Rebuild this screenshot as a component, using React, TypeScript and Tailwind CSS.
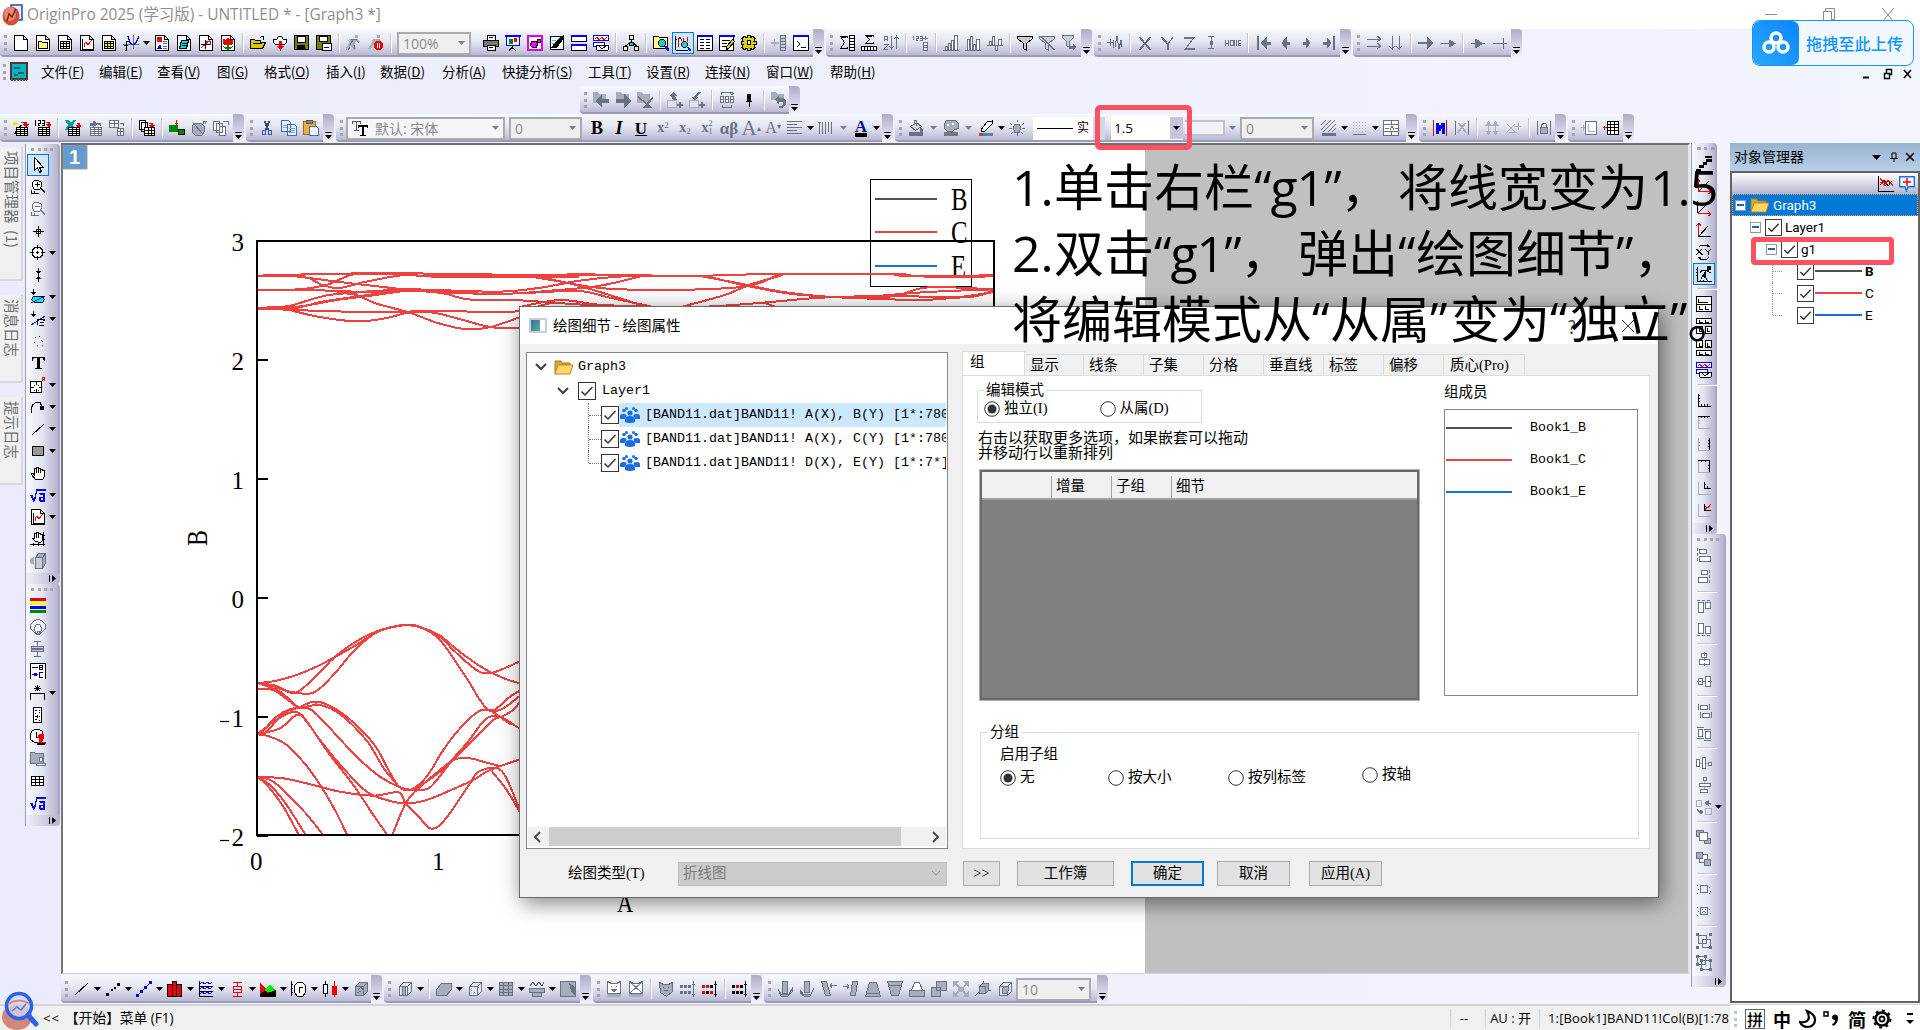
import React from "react";

type Shape = [string, string, string];

const K = "#000";
const W = "#fff";
const R = "#f00000";
const B = "#0000ff";
const N = "none";
const G = "#697184";
const L = "#a7adba";
const Y = "#ffff80";
const C = "#00d8e0";
const PAGE = "M1.5 .5h9l4 4v11h-13zM10.5 .5v4h4";
const GRID = "M3.5 6.5h9v7h-9zM3.5 8.5h9M3.5 11.5h9M6.5 6.5v7M9.5 6.5v7";
const SHEET = "M3.5 7.5h11v8h-11zM3.5 9.5h11M3.5 11.5h11M3.5 13.5h11M7.5 7.5v8M11.5 7.5v8";
const CUBE = "M2.5 5.5l4-4h8v9l-4 4h-8zM2.5 5.5h8v9M10.5 5.5l4-4";

const icons: Record<string, Shape[]> = {
  new: [[K, W, PAGE]],
  open: [[K, W, PAGE], [K, Y, "M3.5 6.5h3l1 1h5v6h-9z"]],
  sheet: [[K, W, PAGE], [K, N, GRID]],
  gpage: [[K, W, PAGE], [K, N, "M3.5 4v10h10"], [R, N, "M5 12v-3l2-2 2 3 3-4v-1"]],
  matrix: [[K, W, PAGE], [K, "#ff0", GRID]],
  func: [[G, N, "M0 9.5h16M10.5 0v14"], [K, N, "M5.5 6.5h-2v9h-2M1 10.5h4"], [B, N, "M4 1.500h1l2 6 2 2h2l2-2 3-6"]],
  layout: [[K, W, PAGE], [N, R, "M3 2h5v5H3z"], [N, B, "M3 14l3-5 2 5z"], [G, N, "M9 6.500h4M9 8.500h4M9 11.500h4M9 13.500h4"]],
  notes: [[K, W, PAGE], [K, C, "M5.500 5.500h7l-2 8h-7z"], [K, N, "M6 8.500h5M6 10.500h5"]],
  axis: [[K, W, PAGE], [R, N, "M3 13l9-8M8 6h4v4"], [K, N, "M3 9.500h9M7.500 5v9"]],
  flower: [[K, W, PAGE], [N, R, "M3 4l3 1 2-3 2 3 3-1v5l-5 2-5-2z"], [N, "#080", "M3 11l5 2 5-2-2 3H5zM7 9h2v6H7z"]],
  folder: [[K, "#d8c800", "M.5 13.500v-9h4l1 1h5v2h5l-3 6z"], [K, N, "M3 8.500h9M9.500 3.500l2-2h2v3"]],
  cloud: [[K, W, "M3.500 9.500l-2-2v-3h3l2-3h3l2 3h3v3l-2 2z"], [R, R, "M7.500 6h2v5h2l-3 4-3-4h2z"]],
  save: [[K, "#7d7a00", "M.5 .5h14v14h-14z"], [K, W, "M3.500 1.500h8v6h-8z"], [K, K, "M3.500 10.500h7v4h-7z"]],
  savep: [[K, "#7d7a00", "M.5 .5h14v14h-14z"], [K, W, "M3.500 1.500h8v5h-8zM6.500 8.500h9v7h-9z"], [B, N, "M8 12.500h5"]],
  run: [[N, L, "M9 0h3v3h-3zM5 4h7l2 3-2 1-2-2-2 4 2 3-2 3-1-3-3-2-2 4h-3l4-7 1-3-2 1-1 2H1l2-4z"], [G, N, "M5 4.500h6M7 5l-3 5M8 10l1 4M2 15l2-3M11 6l2 2"]],
  stop: [[N, L, "M9 0h3v3h-3zM5 4h7l1 2-4 1-1 4-3-1-2 4h-3l4-7z"], [R, R, "M8.500 6.500h4l2 2v4l-2 2h-4l-2-2v-4z"], [W, N, "M9.500 8v5M11.500 8v5"]],
  print: [[K, W, "M4.500 .5h8v5h-8z"], [K, "#777", "M.5 5.500h15v6H.5z"], [K, W, "M4.500 10.500h8v5h-8z"], [N, "#0c0", "M12 7h2v2h-2z"], [K, N, "M6 2.500h4M6 12.500h4"]],
  slide: [[B, "#e8ffff", "M1.500 1.500h13v9h-13z"], [B, B, "M.5 .5h15v1H.5z"], [N, "#080", "M4 4h4v5H4z"], [N, R, "M9 3h3v4h-3z"], [K, N, "M7.500 11v3M4 15.500l3-3 4 3"]],
  mag: [[("#e000e0"), W, "M.5 .5h15v15H.5zM1.500 1.500h13v13h-13z"], [K, "#f0f", "M4.500 6.500h5l1 2-1 4h-4l-2-2zM10.500 4v3h3v-3z"]],
  edit: [[K, W, "M1.500 1.500h13v13h-13z"], [K, K, "M2 13l8-9 4-3v3l-6 8z"], [C, N, "M3 5.500h4M3 8.500h3"]],
  tile: [[K, W, "M.5 .5h15v6H.5zM.5 9.500h15v6H.5z"], [B, B, "M.5 .5h15v1H.5zM.5 9.500h15v1H.5z"]],
  waves: [[B, W, "M.5 .5h15v5H.5zM.5 7.500h11v4H.5z"], [R, N, "M2 3.500l2-1 2 2 3-2 2 2 3-2"], [K, W, "M3.500 10.500h12v4l-1 1h-10l-1-1z"], [K, N, "M6 11l2 2h2l3-2"]],
  tree: [[K, Y, "M6.500 .5h4v4h-4zM.5 11.500h4v4h-4zM11.500 11.500h4v4h-4z"], [K, N, "M8.500 4.500v3M7 8l-5 3M10 8l4 3"], [K, C, "M6.500 7.500h4v3h-4z"]],
  find: [[K, Y, "M.5 1.500h5l1 1h8v11H.5z"], [K, C, "M5.500 6.500l2-2h3l2 2v3l-2 2h-3l-2-2z"], [B, B, "M11 11h2l3 4-1 1z"]],
  gfind: [[K, N, "M.5 1v14M.5 15.500h12M1 4.500h1"], [R, N, "M3 12V5l2-3 2 4M8 3v3M12 2v5"], [K, C, "M6.500 8.500l2-2h2l2 2v2l-2 2h-2l-2-2z"], [B, B, "M12 12h1l3 3-1 1z"]],
  table: [[K, W, "M.5 .5h15v15H.5z"], [B, B, "M.5 .5h15v1H.5z"], [K, N, "M3 4.500h4M9 4.500h4M3 7.500h4M9 7.500h4M3 10.500h4M9 10.500h4M3 13.500h4M9 13.500h4"]],
  tedit: [[K, W, "M.5 .5h14v15H.5z"], [B, B, "M.5 .5h15v1H.5z"], [K, N, "M3 5.500h8M3 8.500h5M3 11.500h4"], [K, "#dd0", "M13.500 4.500l2 2-6 7-2 1v-3z"]],
  gear: [[K, "#e0d000", "M6 .5h3v2l3-1 2 2-1 3h2v3h-2l1 3-2 2-3-1v2h-3v-2l-3 1-2-2 1-3h-2v-3h2l-1-3 2-2 3 1z"], [K, W, "M6.500 5.500h3v4h-3z"]],
  addcol: [[L, L, "M0 7.500h7v1H0zM3.500 4v8"], [G, "#c8ccd6", "M9.500 .5h5v15h-5zM9.500 3.500h5M9.500 6.500h5M9.500 9.500h5M9.500 12.500h5"]],
  cmd: [[K, W, "M.5 .5h15v15H.5z"], [B, B, "M.5 .5h15v1H.5z"], [K, N, "M4 6l3 3-3 3M8 12.500h5"]],
  sigcol: [[K, N, "M8 3V1.500H1.500l4 6-4 6H8V12M2 2.500h5"], [K, W, "M10.500 .5h5v15h-5zM10.500 3.500h5M10.500 6.500h5M10.500 9.500h5M10.500 12.500h5"]],
  sigrow: [[K, N, "M12 2V.5H4.500l4 4-4 4h8V7M5 1.500h6"], [K, W, "M.5 11.500h15v4H.5zM3.500 12v3M6.500 12v3M9.500 12v3M12.500 12v3"]],
  sort: [[G, N, "M1 6V1.500h3V6M1 4.500h3M1 9.500h4l-4 5h4M8.500 1v13M13.500 1v13M6.500 11l2 3 2-3M11.500 4l2-3 2 3"]],
  num: [[G, N, "M.5 1v4M3 1.500h2v2H3v2h2M7 1.500h2v4H7M7 3.500h2M12 1v4M10 3.500h5"], [G, W, "M10.500 7.500h4v8h-4zM10.500 10.500h4M10.500 12.500h4"]],
  bars1: [[G, W, "M2.500 11.500h2v4h-2zM5.500 8.500h2v7h-2zM8.500 5.500h2v10h-2zM11.500 .5h3v15h-3z"], [G, N, "M0 15.500h16"]],
  bars2: [[G, W, "M2.500 4.500h2v11h-2zM5.500 1.500h2v14h-2zM8.500 9.500h2v6h-2zM11.500 4.500h3v11h-3z"], [G, N, "M0 15.500h16"]],
  bars3: [[G, W, "M2.500 6.500h2v4h-2zM5.500 1.500h2v9h-2zM8.500 10.500h2v5h-2zM11.500 4.500h3v6h-3z"], [G, N, "M0 10.500h16"]],
  filter: [[K, "#ccc", "M.5 1.500h15v2l-6 5v7l-3-2v-5l-6-5z"]],
  filterx: [[G, "#ccd0da", "M.5 1.500h15v2l-6 5v7l-3-2v-5l-6-5z"], [G, N, "M1 1l14 14M2 1l14 14"]],
  filterr: [[G, "#ccd0da", "M1.500 .5h11v2l-4 4v6l-3-2v-4l-4-4z"], [G, G, "M8 11h4v-2l3 3-3 3v-2h-4z"]],
  addw: [[G, N, "M0 7.500h6M3 4v7M6.500 13V5M8 12l2-11 2 13 2-9 1 7"]],
  xx: [[G, N, "M2 2l11 13M3 2l11 13M13 2L2 15M14 2L3 15"]],
  yy: [[G, N, "M2 2l6 7v6M3 2l6 7v6M14 2L9 9"]],
  zz: [[G, N, "M3 2.500h10L4 14.500h10M3 3.500h9M4 13.500h10"]],
  err: [[G, N, "M5 1.500h6M5 13.500h6M8.500 1v13"], [G, G, "M7.500 6.500h2v3h-2z"]],
  home: [[G, N, "M0.500 5v6M3.500 5v6M0 8.500h3M5.500 5v6M8 5v6M5 5.500h3M5 10.500h3M9.500 11V5M11.500 5v6M14 5.500h2M14 8.500h2M14 10.500h2M13.500 5v6"]],
  first: [[G, G, "M2.500 1v14M3.500 1v14M15 7v2h-4v4L6 8l5-5v4z"]],
  prev: [[G, G, "M12 7v2h-3v4L5 8l4-5v4z"]],
  next: [[G, G, "M4 7v2h3v4l4-5-4-5v4z"]],
  last: [[G, G, "M12.500 1v14M13.500 1v14M2 7v2h4v4l4-5-4-5v4z"]],
  arr2: [[G, N, "M1 4.500h14M11 1l4 3-4 3M1 11.500h14M11 8l4 3-4 3"]],
  arr2d: [[G, N, "M4.500 1v14M1 11l3 3 3-3M11.500 1v14M8 11l3 3 3-3"]],
  arrR: [[G, G, "M0 7.500h9v1H0zM9 2v12l6-6z"]],
  arrS: [[G, G, "M1 8.500h9M9 5v7l6-3.500z"]],
  arrT: [[G, G, "M1 8.500h14M5 4v9l8-4.500z"]],
  arrL: [[G, N, "M1 8.500h14M11.500 3v11"]],
  back: [[N, L, "M0 0h5l1 2h7v9H0z"], [N, G, "M2 9l7-7v5h7v4H9v5z"]],
  fwd: [[N, L, "M1 0h5l1 2h7v9H1z"], [N, G, "M16 9L9 2v5H1v4h8v5z"]],
  upf: [[N, L, "M0 0h5l1 2h7v9H0z"], [N, G, "M1 4l9 7 5-6 1 1-4 6 3 4H5l4-4-8-6z"]],
  upadd: [[L, "#dfe3ee", "M.5 8.500h9v7h-9z"], [N, G, "M6 0l4 4H8l2 4H6L4 4H2zM12 10h2v2h2v2h-2v2h-2v-2h-2v-2h2z"]],
  dnadd: [[L, "#dfe3ee", "M.5 8.500h9v7h-9z"], [N, G, "M9 0h3L7 5h2l-3 4-4-4h2zM12 10h2v2h2v2h-2v2h-2v-2h-2v-2h2z"]],
  cycle: [[G, W, "M1.500 4.500h3v6h-3zM6.500 4.500h3v6h-3zM11.500 4.500h3v6h-3zM1.500 7.500h3M6.500 7.500h3M11.500 7.500h3"], [G, N, "M2 2.500V.5h11v2M3 13v2.500h9v-3M11 1l2 2 2-2"]],
  pin: [[K, K, "M6.500 2.500h3v6h-3zM5 9.500h6M8.500 10v5"]],
  undo: [[N, L, "M0 0h5l1 2h7v6H0z"], [N, G, "M4 7l4-4v3h4l3 3v4l-4 3h-3v-2h2l2-2v-2H8v3z"]],
  wand: [[N, "#e8e800", "M0 2h3v1h2v2H0z"], [K, N, "M1 14l7-9M2 14l7-9"], [R, R, "M8 2.500h5v2M11 4.500h4l-2 2z"], [K, W, SHEET]],
  n123: [[K, N, "M.5 0v6M3 .5h2v2.500H3v2.500h2M7 .5h2v5H7M7 3.500h2"], [R, R, "M11 2.500h3v2M12 4.500h4l-2 2z"], [K, W, SHEET]],
  excel: [[N, "#00a0a0", "M0 0h4l2 3 2-3h3L8 5l3 5H7L5 7l-2 3H0l3-5z"], [R, R, "M12 3.500h2v2M12 5.500h4l-2 2z"], [K, W, SHEET]],
  gsheet: [[G, G, "M3 3h4l-1-2 4 3-4 3v-2H3zM10 4l3-1 1 3"], [G, W, SHEET]],
  gsheet2: [[G, W, "M.5 .5h9v7h-9zM.5 3.500h9M5.500 1v6M11 3.500h3v2"], [G, W, "M8.500 8.500h6v7h-6zM8.500 11.500h6M11.500 8v7"]],
  batch: [[K, W, "M.5 .5h6v9h-6zM2.500 2.500h6v9h-6z"], [R, R, "M10 3.500h3v2M11 5.500h4l-2 2z"], [K, W, "M5.500 7.500h10v8h-10zM5.500 10.500h10M5.500 13.500h10M9.500 7v8M12.500 7v8"]],
  plug: [[N, "#008800", "M0 5h9v7H0z"], [R, R, "M7.500 0v5M6 3.500h3"], [K, "#080", "M9.500 9.500h6v5h-6z"]],
  globe: [[G, L, "M2.500 3.500h8l3 3v5l-3 4h-6l-3-3v-6z"], [G, N, "M3 4l9 10M12 4v-3h4M14 1v3"]],
  copyg: [[G, W, "M.5 1.500h6v9h-6zM3.500 3.500h6v9h-6zM6.500 6.500h6v9h-6z"], [G, N, "M10 1.500h5v3"]],
  cut: [[("#3a4a66"), N, "M5 1l4 9M6 1l4 9M11 1L7 10M10 1L6 10"], ["#2858b8", N, "M3.500 10.500h3v4h-3zM9.500 10.500h3v4h-3z"]],
  copy: [["#3c6cc0", "#e6f0ff", "M.5 .5h7l2 2v9h-9zM6.500 4.500h7l2 2v9h-9z"], ["#7aa8e8", N, "M8 8.500h6M8 10.500h6M8 12.500h6M2 5.500h4M2 7.500h4"]],
  paste: [["#a06818", "#e8b040", "M.5 1.500h12v13H.5z"], ["#555", "#888", "M3.500 .5h6v3h-6z"], ["#3c6cc0", "#eef4ff", "M6.500 6.500h7l2 2v7h-9z"]],
  fontTT: [[N, "#555", "M0 1h9v3H8V2H5v8h2v1H2v-1h2V2H1v2H0z"], [N, K, "M6 5h10v3h-1V7h-3v8h2v1H8v-1h2V7H7v1H6z"]],
  align: [[G, N, "M0 1.500h15M0 4.500h10M0 7.500h15M0 10.500h10M0 13.500h15"]],
  vlines: [[G, N, "M1.500 2v12M4.500 2v12M7.500 2v12M10.500 2v10M13.500 2v12M0 2.500h3"]],
  bucket: [[G, "#d5d9e3", "M2.500 6.500l6-4 5 4-6 4z"], [G, N, "M6.500 5V.5h2V6"], [N, G, "M12 7l3 3v2h-3zM1 12h14v4H1z"]],
  palette: [[G, L, "M3.500 .5h9l3 3v5l-4 1-2 2h-5l-3-3v-5z"], [N, W, "M4 4h2v2H4zM9 3h2v2H9z"], [N, "#777", "M1 12h14v4H1z"]],
  pen: [[K, W, "M3 10l6-8 5-1v3l-7 7-4 1z"], [N, "#e03030", "M1 13h4v3H1z"], [N, "#2090e0", "M5 13h4v3H5z"], [N, "#30b050", "M9 13h3v3H9z"], [N, "#b050c0", "M12 13h3v3h-3z"]],
  bulb: [[G, L, "M5.500 4.500h5l1 3-1 5h-5l-1-5z"], [G, N, "M1 3l2 2M15 3l-2 2M0 8.500h3M13 8.500h3M2 14l2-2M14 14l-2-2M8.500 0v2M8.500 13v3"]],
  hatch: [[G, N, "M0 5l5-5M0 10l10-10M2 12L14 0M7 12l8-8M11 12l4-4M3 2l-3 3"], [N, G, "M1 13h14v3H1z"]],
  dotg: [[L, N, "M1 2.500h1m2 0h1m2 0h1m2 0h1m2 0h1M1 5.500h1m2 0h1m2 0h1m2 0h1m2 0h1M1 8.500h1m2 0h1m2 0h1m2 0h1m2 0h1M1 11.500h1m2 0h1m2 0h1m2 0h1m2 0h1"], [G, N, "M1 14.500h13"]],
  tblA: [[G, W, "M.5 .5h15v15H.5zM.5 4.500h15M.5 11.500h15M8.500 1v4M8.500 12v3"], [G, N, "M2 8.500h4M7 9.500l2-3 2 3M12 8.500h3"]],
  mred: [[R, N, "M1.500 0v16M14.500 0v16"], [B, B, "M4 13V3h2l2 4 2-4h2v10h-2V7l-2 4-2-4v6z"]],
  mx: [[G, N, "M1.500 1v14M14.500 1v14"], [L, N, "M4 3l8 10M5 3l8 10M12 3L4 13M11 3L3 13"]],
  mv: [[L, L, "M4.500 2v12M2 5l2.500-3L7 5zM2 11l2.500 3L7 11zM11.500 2v12M9 5l2.500-3L14 5zM9 11l2.500 3L14 11z"]],
  mv2: [[L, N, "M1 4l8 8M9 4l-8 8M8 6.500h7M12.500 3v7M3 12.500h8"]],
  lock: [[G, N, "M1.500 1v14M14.500 1v14M5.500 7V5l2-2h2l1 2v2"], [G, L, "M4.500 7.500h7v6h-7z"]],
  addl: [[L, N, "M0 7.500h4M2 5v6"], [G, W, "M4.500 1.500h11v13h-11z"], [L, N, "M7.500 4v7h6"]],
  addt: [[R, R, "M0 7.500h4M1.500 6v4"], [K, W, "M4.500 1.500h11v13h-11zM4.500 4.500h11M4.500 7.500h11M4.500 10.500h11M7.500 1v13M11.500 1v13"]],
  cursor: [[K, W, "M4.500 .5v13l3-3 2 5 2-1-2-4h4z"]],
  zin: [[K, W, "M2.500 3.500l2-2h4l3 2v4l-2 3h-5l-2-3z"], [K, N, "M5 5.500h5M7.500 3v5M10 9l5 5M11 9l4 4M1.500 11v4M1 14.500h8M4.500 12v3"]],
  zout: [[G, W, "M2.500 3.500l2-2h4l3 2v4l-2 3h-5l-2-3z"], [G, N, "M5 5.500h5M10 9l5 5M11 9l4 4M1.500 11v4M1 14.500h8M4.500 12v3"]],
  cross: [[K, W, "M6.500 6.500h4v4h-4z"], [K, N, "M3 8.500h11M8.500 3v11"]],
  target: [[K, W, "M3.500 3.500l2-1h4l2 1 1 2v4l-1 2-2 1h-4l-2-1-1-2v-4z"], [K, N, "M0 7.500h4M11 7.500h4M7.500 0v4M7.500 11v4M6 7.500h3M7.500 6v3"]],
  range: [[K, K, "M8.500 1v14M6.500 4.500h4l-2 2zM6.500 11.500h4l-2-2z"]],
  ellip: [[K, K, "M3.500 0v4M1.500 3.500h4l-2 2z"], [K, "#00f0f0", "M3.500 7.500h9l2 3-2 3h-8l-3-3z"], [B, N, "M1 14l14-7"]],
  mask: [[K, K, "M3.500 0v4M1.500 3.500h4l-2 2z"], [B, N, "M1 14L15 5"], [K, N, "M7.500 8.500h7M7.500 8v6M9 14.500h5M10 11.500h4M13 9.500h2"]],
  dots: [[K, K, "M5 4.500h1M11 7.500h1M4 9.500h1M7 12.500h1M12 12.500h1M9 3.500h1M12 8h1"]],
  tt: [[N, K, "M2 2h13v4h-1l-1-3h-3v10h2v1H5v-1h2V3H4L3 6H2z"]],
  addx: [[K, W, "M.5 4.500h11v11H.5z"], [K, N, "M6.500 4v4M6.500 12v4M0 10.500h4M9 10.500h3M4 8h1M8 8h1M4 13h1M8 13h1"], [R, N, "M12.500 4V.5h2V4M12 2.500h3"]],
  curve: [[K, N, "M1 13.500v-4l2-4 3-2h4l2 4"], [K, K, "M10.500 7.500h3v3h-3z"]],
  line: [[K, N, "M2 14L14 3"]],
  rect: [[K, "#999", "M2.500 3.500h11v9h-11z"]],
  hand: [[K, W, "M5.500 14.500l-4-5v-1h2l1 2v-7h2v-1h2v1h2v1h2v1h2v6l-2 3z"], [K, N, "M6.500 4v4M8.500 3v5M10.500 4v4"]],
  sqrt: [[B, N, "M0 8.500h2l2 6 3-12h9M1 8.500l3 6M5 12l2-10M7 3.500h9"], [B, N, "M9 6.500h5v8h-4v-4h4M10 7.500h3M9.500 10v4M13.500 7v8M10 13.500h4"]],
  handa: [[K, W, "M5.500 10.500l-3-3h2v-5h2v-1h2v1h2v1h2v6l-2 2z"], [K, N, "M6.500 3v4M8.500 3v4M0 13.500h15M13.500 1v14M3.500 12v3M8.500 12v3M12 4.500h3M12 8.500h3"]],
  box3: [[G, L, "M5.500 4.500l3-4h7v10l-3 5h-7z"], [G, "#c9cdd8", "M5.500 4.500h7v11h-7zM12.500 4.500l3-4"], [N, L, "M0 6l4-2v8l-4-2z"]],
  colors: [[N, R, "M0 1h16v3H0z"], [N, "#ff0", "M0 5h16v3H0z"], [N, B, "M0 9h16v3H0z"], [N, "#080", "M0 13h16v3H0z"]],
  bub: [[G, "#eef1f8", "M3.500 2.500l3-2h3l3 2 3 3v4l-3 3-3 3h-3l-3-3-3-3v-4zM4.500 8.500l2-3h3l2 3v3l-2 3h-3l-2-3zM7.500 12.500h2v3h-2z"]],
  box: [[G, "#c5c9d5", "M1.500 5.500h12v5h-12zM2 7.500h12M2 8.500h12"], [G, N, "M7.500 .5v5M7.500 11v4M4 .5h7M4 15.500h7"]],
  leg: [[K, W, "M.5 15.500V.5h15v15"], [K, N, "M2 4.500h6M9.500 2v5M9 2.500h3.500v4H9M9 4.500h4M13 9.500H9.500v5H13"], [B, B, "M2 11.500h6M4.500 10.500h2v2h-2z"]],
  star: [[K, N, "M7.500 0v6M4 3.500h7M5 1l5 5M10 1L5 6M.5 15V8.500h14V15"]],
  scale: [[K, W, "M3.500 .5h8v15h-8z"], [K, N, "M5 3.500h2M9 3.500h1M5 6.500h1M9 5.500h1M5 9.500h2M9 9.500h1M5 12.500h2M9 13.500h1M7.500 8v3"]],
  clock: [[K, W, "M2.500 1.500l3-1h4l3 2v9l-3 2h-5l-4-3v-6z"], [K, N, "M6.500 3v5h3"], [R, R, "M9.500 5.500h4v4l-2 1v2h-2v-2l-1-3zM7 13h9v1H7z"], [K, W, "M7.500 14.500h7v1h-7z"]],
  fstamp: [[G, L, "M.5 1.500h4l1 1h8v10H.5z"], [G, W, "M9.500 6.500h3v4h-3zM6.500 12.500h9v2h-9z"]],
  grid: [[K, W, "M1.500 3.500h12v9h-12zM1 6.500h12M1 9.500h12M5.500 3v9M9.500 3v9"]],
  black: [[N, K, "M3 9h4V6h3V3h6v3h-5v3H8v3H3zM9 0h7v2H9zM0 13h5v3H0z"]],
  ax1: [[R, N, "M2.500 1v12M0 4l2-3 2 3M2 13.500h13M12 11l3 3-3 2"], [K, N, "M3 13L13 3"]],
  ax2: [[K, N, "M1.500 1v12M2 13L12 3"], [R, N, "M2 13.500h13M12 11l3 3-3 2"]],
  ax3: [[R, N, "M2.500 1v14M0 4l3-3 2 3"], [K, N, "M2 14.500h13M3 14L12 4"]],
  xy: [[K, N, "M0 5l6 6M6 5l-6 6M1 5l6 6M9 5l3 3v3M15 5l-3 3M3 3l2-2h6l3 2M13 13l-2 2H5l-3-2M11 0v3M4 13v3"]],
  runner: [[K, N, "M1.500 1v14.500h14M0 3.500h2M0 6.500h2M0 9.500h2M4.500 14v2M7.500 14v2M11.500 14v2"], [K, K, "M11 0h3v3h-3zM6 4h6l1 2 2 1M10 5l-3 5 3 2v2M8 8l-3 5M6 4L4 7"]],
  mg1: [[K, W, "M.5 .5h15v15H.5zM.5 8.500h15"], [K, N, "M2.500 3v3h9M3.500 10v3h3M9.500 10v3h3"]],
  mg2: [[K, W, "M.5 .5h15v5H.5zM.5 8.500h6v7h-6zM9.500 8.500h6v7h-6z"], [K, N, "M3.500 2v2h3M9.500 2v2h3M3.500 10v3h2M11.500 10v3h2"]],
  mg3: [[K, W, "M.5 10.500h15v5H.5zM.5 .5h6v7h-6zM9.500 .5h6v7h-6z"], [K, N, "M3.500 12v2h3M9.500 12v2h3M3.500 3v3h2M11.500 3v3h2"]],
  fr1: [[K, N, "M2.500 2v12h12M3 3.500h1M3 6.500h1M3 9.500h1M5.500 12v2M8.500 12v2M11.500 12v2"]],
  fr2: [[L, N, "M2.500 2v12h12M3 6.500h1M3 9.500h1"], [K, N, "M2 2.500h12M5.500 2v2M8.500 2v2M11.500 2v2"]],
  fr3: [[L, N, "M2.500 2v12h12M3 6.500h1M3 9.500h1"], [K, N, "M13.500 2v12M12 4.500h2M12 7.500h2M12 10.500h2"]],
  fr4: [[L, N, "M2.500 2v12h12"], [K, N, "M2 2.500h12M13.500 2v12M5.500 2v2M9.500 2v2M12 7.500h2M12 10.500h2"]],
  fr5: [[L, N, "M2.500 2v12h12"], [K, N, "M8.500 2v6h6M8 4.500h2M11.500 6v2"]],
  fr6: [[L, N, "M2.500 2v12h12"], [K, N, "M8.500 2v6h6M8 4.500h2"], [R, N, "M9 8l2-3 1 1 3-4"]],
  al1: [[G, N, "M1.500 1v3M1.500 6v3M1.500 11v3"], [G, W, "M3.500 2.500h7v4h-7zM3.500 9.500h11v5h-11z"]],
  al2: [[G, N, "M13.500 1v3M13.500 6v3M13.500 11v3"], [G, W, "M5.500 1.500h6v4h-6zM2.500 8.500h9v5h-9z"]],
  al3: [[G, N, "M1 1.500h3M6 1.500h3M11 1.500h3"], [G, W, "M2.500 3.500h5v10h-5zM9.500 3.500h5v6h-5z"]],
  al4: [[G, N, "M1 14.500h3M6 14.500h3M11 14.500h3"], [G, W, "M2.500 2.500h5v10h-5zM9.500 5.500h5v7h-5z"]],
  al5: [[G, W, "M5.500 2.500h5v4h-5zM3.500 8.500h10v5h-10z"], [G, N, "M8.500 1v4M8.500 6v4M8.500 12v3"]],
  al6: [[G, W, "M2.500 5.500h4v6h-4zM9.500 3.500h5v10h-5z"], [G, N, "M1 8.500h4M6 8.500h4M12 8.500h4"]],
  al7: [[G, W, "M4.500 2.500h7v4h-7zM6.500 10.500h7v4h-7z"], [G, N, "M2.500 1v6M13.500 1v6M4.500 9v6M15.500 9v6"]],
  al8: [[G, W, "M2.500 4.500h4v7h-4zM9.500 6.500h5v7h-5z"], [G, N, "M1 2.500h7M1 13.500h7M8 4.500h7M8 15.500h7"]],
  ds1: [[L, N, "M2 8.500h12"], [G, W, "M.5 4.500h3v7h-3zM6.500 2.500h3v11h-3zM12.500 7.500h3v3h-3z"]],
  ds2: [[L, N, "M8.500 2v12"], [G, W, "M7.500 .5h3v3h-3zM3.500 6.500h11v3h-11zM4.500 12.500h7v3h-7z"]],
  swap: [[L, N, "M.5 1.500h5v6h-5zM9.500 9.500h6v6h-6z"], [G, G, "M14.500 6v-2h-4M9 4l3-2v4zM1 10l2 3h3M7 13l-3-2v4z"]],
  front: [[G, L, "M.5 1.500h7v6h-7zM8.500 9.500h6v5h-6z"], [G, W, "M3.500 3.500h8v8h-8z"]],
  backw: [[G, W, "M3.500 3.500h8v8h-8z"], [G, L, "M.5 1.500h6v6h-6zM8.500 8.500h6v6h-6z"]],
  gl1: [[G, "#e8ecf8", "M4.500 4.500h7v7h-7z"], [G, N, "M1 4.500h1M2 8.500h1M1 12.500h1M13 6.500h1M14 10.500h1M13 12.500h1"]],
  gl2: [[G, "#e8ecf8", "M4.500 4.500h7v7h-7z"], [G, N, "M1 4.500h1M2 8.500h1M1 12.500h1M13 6.500h1M14 10.500h1M6 6.500h1M9 6.500h1M7 8.500h2M6 9.500h1M9 9.500h1"]],
  grp: [[G, "#e8ecf8", "M2.500 2.500h8v8h-8zM6.500 6.500h8v8h-8z"], [G, G, "M.5 .5h2v2h-2zM13.500 .5h2v2h-2zM.5 13.500h2v2h-2zM13.500 13.500h2v2h-2z"]],
  ungrp: [[G, "#e8ecf8", "M1.500 1.500h8v8h-8zM5.500 5.500h9v9h-9z"], [G, G, "M.5 .5h2v2h-2zM8.500 .5h2v2h-2zM.5 8.500h2v2h-2zM4.500 4.500h2v2h-2zM13.500 4.500h2v2h-2zM4.500 13.500h2v2h-2zM13.500 13.500h2v2h-2z"]],
  bline: [[K, N, "M1 14L14 2"]],
  bdots: [[K, K, "M1.500 12.500h2v2h-2zM6.500 8.500h1v1h-1zM9.500 6.500h1v1h-1zM12.500 2.500h2v2h-2z"]],
  bld: [[B, B, "M.5 13.500h2v2h-2zM4.500 9.500h2v2h-2zM8.500 5.500h2v2h-2zM13.500 .5h2v2h-2zM1 15L15 1"]],
  bbar: [[K, R, "M.5 3.500h5v12h-5zM5.500 .5h4v15h-4zM9.500 3.500h5v12h-5z"]],
  bwave: [[K, N, "M1 0v16M1 5.500h14M1 10.500h14M1 15.500h14"], [B, N, "M2 3l2-2 3 2 2-2 3 2 2-2M2 8l2-2 3 2 2-2 3 2 2-2M2 13l2-2 3 2 2-2 3 2 2-2"]],
  bbox: [[R, N, "M4 1.500h9M8.500 1v4M4.500 5.500h8v6h-8zM4 8.500h9M8.500 12v3M4 15.500h9"]],
  barea: [[N, R, "M0 2l6 5 5-3 4 5v7H0z"], [N, "#0e0", "M4 9l6-6 5 6-4 3z"], [N, K, "M0 13l5-3 3 2 8-3v7H0z"]],
  bpolar: [[K, W, "M3.500 4.500l3-3h5l3 3v7l-3 4h-5l-3-4z"], [K, N, "M.5 0v15M0 3.500h2M0 7.500h2M0 11.500h2M8.500 12V6h3"]],
  bstock: [[K, W, "M1.500 3.500h4v9h-4zM3.500 0v3M3.500 13v3"], [R, R, "M10.500 5.500h4v8h-4zM12.500 0v16"]],
  bgray: [[G, L, CUBE], [G, N, "M5 9l3-3 2 3M4 12l4-2"]],
  cube1: [[G, "#e4e7f0", CUBE], [G, L, "M5.500 5.500h3v9h-3z"]],
  cube2: [[G, L, "M.5 8.500l5-6h10v6l-5 6H.5z"]],
  cube3: [[G, "#e4e7f0", CUBE], [G, N, "M4 9h1M7 11h1M11 6h1"]],
  ggrid: [[G, L, "M1.500 1.500h13v13h-13zM1.500 4.500h13M1.500 8.500h13M1.500 11.500h13M5.500 1v13M10.500 1v13"]],
  gwave: [[G, N, "M1 5l3-4 3 4 3-4 3 4 2-4"], [G, L, "M.5 7.500h15v4H.5zM3.500 11.500h9v4h-9z"]],
  gpat: [[G, L, "M.5 .5h15v15H.5z"], [N, G, "M9 2l6 4v9l-4-5z"]],
  face: [[G, W, "M1.500 .5l4 2h5l4-2v12h-13z"], [G, G, "M5.500 5v1M10.500 5v1M6 8.500h4l-2 2z"], [N, L, "M1 13h14v3H1z"]],
  facex: [[G, W, "M1.500 .5l4 2h5l4-2v12h-13z"], [G, N, "M2 1l12 11M14 1L2 12"], [N, L, "M1 13h14v3H1z"]],
  mask2: [[G, L, "M1.500 1.500l4 2h5l4-2v9l-6 5-6-4z"], [G, G, "M5.500 6v1M10.500 6v1M6 9.500h4"]],
  ar1: [[N, G, "M0 4h3v3H0zM4 4h3v3H4zM8 4h3v3H8zM0 10h3v3H0zM4 10h3v3H4zM8 10h3v3H8z"], [G, G, "M13.500 0v16M12 3h3M12 13h3"]],
  ar2: [[N, R, "M0 4h3v3H0zM4 4h3v3H4zM8 10h3v3H8zM0 10h3v3H0z"], [N, K, "M4 10h3v3H4zM8 4h3v3H8z"], [K, K, "M13.500 0v16M12 3h3M12 13h3"]],
  ar3: [[N, R, "M4 4h3v3H4z"], [N, K, "M0 4h3v3H0zM8 4h3v3H8zM0 10h3v3H0zM4 10h3v3H4zM8 10h3v3H8z"], [K, K, "M13.500 0v16M12 3h3M12 13h3"]],
  rot1: [[G, L, "M5.500 .5h5v12h-5zM1 8l3 5h8l3-5v3l-4 4H4z"]],
  rot2: [[G, L, "M5.500 .5h5v11h-5zM15 7l-3 6H4L1 9v3l4 3h6z"]],
  til1: [[G, L, "M.5 .5h5l4 14h-5zM9 4.500h7M11 2l-2 2 2 3"]],
  til2: [[G, L, "M14.500 .5h-5l-2 14h5zM0 5.500h6M4 3l2 2-2 3"]],
  trap1: [[G, L, "M4.500 1.500h7l4 14H.5z"], [G, N, "M2 12.500h12"]],
  trap2: [[G, L, "M.5 .5h15l-4 14h-7z"], [G, N, "M2 4.500h12"]],
  trap3: [[G, L, "M.5 9.500h15v6H.5z"], [G, W, "M5.500 1.500h5l3 8h-11z"]],
  sq2: [[G, L, "M5.500 .5h10v9h-10zM.5 6.500h9v9h-9z"]],
  expand: [[N, L, "M0 0h6L4 3l3 3h2l3-3-2-3h6v6l-3-2-2 3v2l2 3 3-2v6h-6l2-3-3-2H7l-3 2 2 3H0v-6l3 2 2-3V7L3 4 0 6z"]],
  cubes: [[G, L, "M4.500 5.500l3-3h6v7l-3 3h-6zM4.500 5.500h6v7"], [G, N, "M0 15l4-4M13 9h3M8.500 0v3"]],
  cubeb: [[G, "#e4e7f0", CUBE], [G, L, "M5.500 7.500l2-2h4v4l-2 3h-4z"]],
};

const glyphs: Record<string, React.ReactNode> = {
  gB: <b className="font-['Liberation_Serif',serif] text-[18px]">B</b>,
  gI: <b className="font-['Liberation_Serif',serif] text-[18px] italic">I</b>,
  gU: <b className="font-['Liberation_Serif',serif] text-[17px] underline">U</b>,
  gsup: <span className="font-['Liberation_Serif',serif] text-[14px] text-[#697184]"><b>x</b><sup className="text-[9px]">2</sup></span>,
  gsub: <span className="font-['Liberation_Serif',serif] text-[14px] text-[#697184]"><b>x</b><sub className="text-[9px]">2</sub></span>,
  gss: (
    <span className="flex items-center font-['Liberation_Serif',serif] text-[14px] text-[#697184]">
      <b>x</b><span className="flex flex-col text-[8px] leading-[8px]"><span>2</span><span>1</span></span>
    </span>
  ),
  gab: <b className="font-['Liberation_Serif',serif] text-[17px] text-[#697184]">αβ</b>,
  gAu: <span className="font-['Liberation_Serif',serif] text-[21px] text-[#697184]">A<sup className="text-[8px]">▴</sup></span>,
  gAd: <span className="font-['Liberation_Serif',serif] text-[16px] text-[#697184]">A<sup className="text-[8px]">▾</sup></span>,
  gA: <b className="border-b-4 border-black font-['Liberation_Serif',serif] text-[17px] leading-[13px] text-[#10108a]">A</b>,
};

function Icon({ name }: { name: string }) {
  if (glyphs[name]) return <span className="flex items-center leading-none whitespace-nowrap">{glyphs[name]}</span>;
  return (
    <svg width="16" height="16" viewBox="0 0 16 16" shapeRendering="crispEdges" className="shrink-0">
      {(icons[name] ?? []).map(([stroke, fill, d], i) => (
        <path key={i} d={d} stroke={stroke} fill={fill} />
      ))}
    </svg>
  );
}

function Tri({ gray }: { gray?: boolean }) {
  return (
    <svg width="7" height="4" viewBox="0 0 7 4" className="shrink-0">
      <path d="M0 0h7L3.500 4z" fill={gray ? "#7c7f8c" : "#000"} />
    </svg>
  );
}

/** Draws a row of toolbar cells; "|" is a separator, "v"/"w" narrow and wide drop-down arrows, "!" marks the active tool. */
function Tools({ s }: { s: string }) {
  return (
    <>
      {s.split(" ").map((t, i) => {
        if (t === "|") return <div key={i} className="mx-[3px] h-5 w-0.5 shrink-0 border-l border-[#c3c4cf] bg-white" />;
        if (t === "v") return <div key={i} className="flex w-[9px] shrink-0 justify-center"><Tri /></div>;
        if (t === "w") return <div key={i} className="flex w-[13px] shrink-0 justify-center"><Tri gray /></div>;
        if (t[0] === "!")
          return (
            <div key={i} className="flex size-[22px] shrink-0 items-center justify-center border border-[#0078d7] bg-[#cfe6f8]">
              <Icon name={t.slice(1)} />
            </div>
          );
        return (
          <div key={i} className="flex h-[22px] w-[22px] shrink-0 items-center justify-center">
            <Icon name={t} />
          </div>
        );
      })}
    </>
  );
}

function Bar({ className, children }: { className: string; children: React.ReactNode }) {
  return (
    <div className={`flex h-[28px] shrink-0 ${className}`}>
      <div className="flex min-w-0 flex-1 items-center overflow-hidden rounded-bl border-b-2 border-[#9a9bb8] bg-linear-to-b from-[#f6f9fe] via-[#e3e5f1] to-[#b9bad2] pt-0.5">
        <div className="flex w-[10px] shrink-0 justify-center">
          <div className="h-4 border-l-[3px] border-dotted border-[#a5a5ad]" />
        </div>
        {children}
      </div>
      <div className="mr-0.5 flex w-[11px] shrink-0 flex-col items-center justify-end gap-0.5 rounded-tr rounded-br bg-linear-to-b from-[#adaec6] via-[#cdcee2] to-[#f0f1fc] pb-[3px]">
        <div className="h-px w-[7px] bg-black" />
        <Tri />
      </div>
    </div>
  );
}

function VBar({ s, className }: { s: string; className: string }) {
  return (
    <div className={`flex shrink-0 flex-col border-l border-[#9a9bb8] ${className}`}>
      <div className="flex min-h-0 flex-1 flex-col rounded-t border-r-2 border-[#a6a7c2] bg-linear-to-r from-[#f6f9fe] via-[#e3e5f1] to-[#b3b4ce] pl-[1px]">
        <div className="flex h-[10px] shrink-0 items-center pl-1">
          <div className="w-[22px] border-t-[3px] border-dotted border-[#a5a5ad]" />
        </div>
        {s.split(" ").map((t, i) =>
          t === "|" ? (
            <div key={i} className="my-[3px] ml-1 h-0.5 w-5 shrink-0 border-t border-[#c3c4cf] bg-white" />
          ) : (
            <div key={i} className="flex h-[22px] shrink-0 items-center">
              <Tools s={t.replace("+", "")} />
              {t.includes("+") && <Tri />}
            </div>
          ),
        )}
      </div>
      <div className="flex h-[11px] shrink-0 items-center justify-end gap-0.5 rounded-b bg-linear-to-r from-[#f0f1fc] to-[#b3b4ce] pr-1">
        <div className="h-[7px] w-px bg-black" />
        <svg width="4" height="7"><path d="M0 0v7l4-3.500z" /></svg>
      </div>
    </div>
  );
}

function Combo({ text, className, textClass = "text-[#8b8b8b]" }: { text: string; className: string; textClass?: string }) {
  return (
    <div className={`flex h-[23px] shrink-0 items-center justify-between border-2 border-[#ababaf] bg-[#efefef] px-1 text-[14px] ${className}`}>
      <span className={textClass}>{text}</span>
      <Tri gray />
    </div>
  );
}

function smooth(points: string) {
  const p = points.split(" ").map((q) => q.split(",").map(Number));
  let d = `M${p[0][0]} ${p[0][1]}`;
  for (let i = 0; i < p.length - 1; i++) {
    const a = p[i - 1] ?? p[i];
    const b = p[i];
    const c = p[i + 1];
    const e = p[i + 2] ?? c;
    d += `C${b[0] + (c[0] - a[0]) / 6} ${b[1] + (c[1] - a[1]) / 6} ${c[0] - (e[0] - b[0]) / 6} ${c[1] - (e[1] - b[1]) / 6} ${c[0]} ${c[1]}`;
  }
  return d;
}

const lowerBands = [
  "52,249 100,244 170,225 250,190 340,140 400,103 450,82 500,75 550,85 600,107 650,148 700,185 750,216 800,238 840,250",
  "52,249 110,258 160,280 200,255 250,205 300,158 380,107 450,82 500,75 550,85 600,110 640,150 690,195 725,218 765,216 840,184",
  "52,249 80,252 150,275 220,278 280,225 340,155 410,97 500,75 550,85 600,120 650,190 690,250 720,300 755,333 810,290 840,272",
  "52,249 120,275 170,318 215,330 270,385 350,470 420,530 480,562 520,570 570,562 630,490 700,420 760,360 785,350 820,330 840,305",
  "52,403 80,395 130,340 170,325 220,305 260,313 320,350 400,430 440,500 475,558 510,570 560,530 610,450 660,385 720,332 780,330 840,287",
  "60,403 110,350 150,328 200,320 240,315 300,342 380,422 430,503 475,558",
  "52,403 100,366 150,338 185,345 240,420 310,505 380,575 440,600 497,610 560,600 640,567 700,540 750,510 840,478",
  "52,403 120,385 170,345 200,365 270,465 340,555 400,645 440,702",
  "52,403 90,410 140,435 200,498 250,570 290,640 320,702",
  "52,530 130,535 200,550 300,575 400,587 475,577 497,610 540,655 570,685 600,675 640,625 690,550 720,513 785,513 840,632",
  "52,530 100,545 160,600 210,655 247,702",
  "52,530 90,555 140,615 195,702",
  "52,530 85,560 130,620 175,702",
  "458,702 497,610 530,570 600,510 645,478 690,475 740,488 780,498",
  "520,570 600,515 680,430 725,370 750,350 790,355 840,387",
  "755,333 815,375",
  "755,513 800,570 840,637",
  "52,267 100,270 140,297 180,323 230,312",
];

const upperBands = [
  "35,347 250,341 400,348 600,347 700,343 850,347 960,347 1100,342 1350,342 1400,348 1556,346",
  "35,347 140,343 250,340 340,338 420,343 610,344 850,346",
  "35,347 130,350 170,375 205,384 260,365 340,345 400,350 560,352 700,352",
  "35,389 120,388 180,374 240,341 330,340 365,344",
  "35,389 130,389 250,395 350,388 530,395 620,383 700,362 780,350 850,347",
  "35,443 100,438 180,406 280,395 400,393 500,402 570,400 640,392 740,378 830,348",
  "35,445 110,445 170,425 250,408 330,393 420,397 540,403",
  "35,447 120,440 200,420 280,405 350,390",
  "35,445 150,452 300,457 400,452 530,457 580,452 650,425",
  "90,445 160,470 240,484 300,475 350,457 400,458 460,480 520,502 580,504",
  "200,398 240,405 280,430 350,458 410,490 470,508 520,500 580,470",
  "110,348 240,372 350,390 420,400 470,418 560,420 620,425 720,435 850,440",
  "610,347 680,370 750,385 850,390 950,388 1050,378 1110,345",
  "950,348 1030,370 1130,398 1250,413 1350,408 1420,382 1556,388",
  "960,347 1040,376 1140,402 1250,413",
  "910,441 1000,405 1050,375 1120,345",
  "580,440 660,420 740,434 850,440 960,440 1080,428 1200,413 1350,408 1500,412 1556,390",
  "580,400 700,393 760,412 850,440",
  "600,350 680,370 740,395 830,436",
  "1250,413 1400,420 1480,412 1556,396",
  "1300,410 1420,396 1556,388",
  "1350,346 1450,351 1556,349",
  "1080,428 1105,440",
];

function Chart() {
  const ticks: [string, number][] = [["3", 241], ["2", 360], ["1", 479], ["0", 598], ["-1", 717], ["-2", 836]];
  const keys: [string, string, number][] = [["B", "#515151", 199], ["C", "#f14040", 232], ["E", "#1a6fdf", 266]];
  return (
    <svg width="1625" height="828" viewBox="63 145 1625 828" className="absolute inset-0 font-['Liberation_Serif',serif]">
      <rect x="63" y="145" width="1082" height="828" fill="#fff" />
      <rect x="870.500" y="179.500" width="101" height="107" fill="#fff" stroke="#000" shapeRendering="crispEdges" />
      {keys.map(([t, c, y]) => (
        <g key={t}>
          <path d={`M875 ${y}h62`} stroke={c} strokeWidth="2" />
          <text transform={`translate(951 ${y + 11}) scale(.8 1)`} fontSize="31">{t}</text>
        </g>
      ))}
      <g fill="none" stroke="#f14040" strokeWidth="2" shapeRendering="crispEdges">
        <g transform="translate(240 600) scale(.33333)">
          {lowerBands.map((b) => <path key={b} d={smooth(b)} vectorEffect="non-scaling-stroke" />)}
        </g>
        <g transform="translate(240 160) scale(.4847 .33333)">
          {upperBands.map((b) => <path key={b} d={smooth(b)} vectorEffect="non-scaling-stroke" />)}
        </g>
      </g>
      <rect x="257" y="241" width="737" height="594" fill="none" stroke="#000" strokeWidth="2" />
      {ticks.map(([t, y]) => (
        <g key={t}>
          <path d={`M257 ${y}h11`} stroke="#000" strokeWidth="2" />
          <text x="244" y={y + 10} fontSize="25" textAnchor="end">{t.slice(-1)}</text>
          {t.length > 1 && <path d={`M220 ${y + 4.500}h9`} stroke="#000" strokeWidth="1.200" />}
        </g>
      ))}
      <text x="250" y="870" fontSize="25">0</text>
      <text x="432" y="870" fontSize="25">1</text>
      <text transform="translate(207 546) rotate(-90) scale(.82 1)" fontSize="29">B</text>
      <text transform="translate(617 912) scale(.8 1)" fontSize="28">A</text>
      <rect x="63" y="145" width="24" height="24" fill="#6699cc" stroke="#a0a0a0" />
      <text x="69" y="164" fontSize="20" fontWeight="bold" fill="#fff" fontFamily="Liberation Sans">1</text>
    </svg>
  );
}

function Check({ small }: { small?: boolean }) {
  return (
    <svg width={small ? 17 : 18} height={small ? 17 : 18} viewBox="0 0 18 18" className="shrink-0">
      <rect x=".5" y=".5" width="17" height="17" fill="#fff" stroke="#333" />
      <path d="M3.500 9.500l3.500 3.500 7.500-8" fill="none" stroke="#333" strokeWidth="1.500" />
    </svg>
  );
}

function Folder() {
  return (
    <svg width="20" height="16" viewBox="0 0 20 16" className="shrink-0">
      <path d="M1 15V2h6l1 2h8v3" fill="#d8a83c" stroke="#a07a2c" />
      <path d="M1 15L4 6h15l-3 9z" fill="#ffd764" stroke="#b8862c" />
    </svg>
  );
}

function Group() {
  return (
    <svg width="20" height="16" viewBox="0 0 20 16" className="mr-[5px] shrink-0" fill="#1a6fe0">
      <circle cx="10" cy="6" r="2.600" /><path d="M5 12q0-3 5-3t5 3v3q-5 2-10 0z" />
      <circle cx="4" cy="3.500" r="1.800" /><path d="M0 9q0-2 3.500-2t3 2l-2 3H0z" />
      <circle cx="16" cy="3.500" r="1.800" /><path d="M20 9q0-2-3.500-2t-3 2l2 3H20z" />
      <circle cx="6.500" cy="1.500" r="1.500" /><circle cx="13.500" cy="1.500" r="1.500" />
    </svg>
  );
}

function Chev() {
  return <svg width="12" height="8" viewBox="0 0 12 8" className="shrink-0"><path d="M1 1l5 5 5-5" fill="none" stroke="#404040" strokeWidth="2" /></svg>;
}

function Radio({ on, label }: { on?: boolean; label: string }) {
  return (
    <div className="flex items-center gap-1 whitespace-nowrap">
      <svg width="16" height="16"><circle cx="8" cy="8" r="7.300" fill="#fff" stroke="#333" />{on && <circle cx="8" cy="8" r="4.500" fill="#333" />}</svg>
      {label}
    </div>
  );
}

const CELL_TABS = ["显示", "线条", "子集", "分格", "垂直线", "标签", "偏移"];

function Dialog() {
  const rows = ["[BAND11.dat]BAND11! A(X), B(Y) [1*:780", "[BAND11.dat]BAND11! A(X), C(Y) [1*:780", "[BAND11.dat]BAND11! D(X), E(Y) [1*:7*]"];
  const members: [string, string][] = [["Book1_B", "bg-[#515151]"], ["Book1_C", "bg-[#f14040]"], ["Book1_E", "bg-[#1a6fdf]"]];
  const btn = "flex h-[25px] items-center justify-center border bg-[#e1e1e1]";
  return (
    <div className="absolute top-[306px] left-[519px] flex h-[592px] w-[1140px] flex-col border border-[#6a6a6a] bg-[#f0f0f0] font-['Liberation_Serif','Noto_Sans_CJK_SC',serif] text-[14.500px] leading-none text-black shadow-[3px_5px_20px_rgba(0,0,0,0.5)]">
      <div className="flex h-[37px] shrink-0 items-center bg-white pl-[9px] font-['Noto_Sans_CJK_SC',sans-serif]">
        <div className="h-[15px] w-[18px] border-2 border-[#c9ced6] bg-white"><div className="h-full w-[9px] bg-linear-to-br from-[#3a6ea8] to-[#56b08c]" /></div>
        <span className="ml-1.5 text-[14.500px] word-spacing-[2px]">绘图细节 - 绘图属性</span>
        <span className="ml-auto text-[18px] text-[#444]">?</span>
        <svg width="14" height="14" className="mr-[23px] ml-[45px]"><path d="M1 1l12 12M13 1L1 13" stroke="#333" fill="none" /></svg>
      </div>
      <div className="flex flex-1 flex-col">
        <div className="mt-[8px] flex h-[497px]">
          <div className="ml-[6px] flex w-[422px] flex-col border border-[#828790] bg-white font-['Liberation_Mono',monospace] text-[13.333px]">
            <div className="mt-0.5 flex h-6 items-center pl-2"><Chev /><div className="ml-[7px] mr-1"><Folder /></div>Graph3</div>
            <div className="flex h-6 items-center pl-[30px]"><Chev /><div className="ml-[9px] mr-1.5"><Check /></div>Layer1</div>
            {rows.map((r, i) => (
              <div key={r} className="flex h-6 items-center pr-px pl-[61px]">
                <div className={`w-[13px] border-l border-dotted border-[#777] ${i === 2 ? "h-3 self-start" : "h-6"}`}><div className="mt-3 border-t border-dotted border-[#777]" /></div>
                <Check />
                <div className={`flex h-6 flex-1 items-center overflow-hidden whitespace-pre ${i === 0 ? "bg-[#cce8ff]" : ""}`}><div className="w-px shrink-0" /><Group />{r}</div>
              </div>
            ))}
            <div className="mx-px mt-auto mb-0.5 flex h-[19px] items-center bg-[#f0f0f0]">
              <svg width="21" height="12"><path d="M12 1L7 6l5 5" fill="none" stroke="#444" strokeWidth="1.800" /></svg>
              <div className="h-full w-[352px] bg-[#cdcdcd]" />
              <svg width="19" height="12" className="ml-auto"><path d="M6 1l5 5-5 5" fill="none" stroke="#444" strokeWidth="1.800" /></svg>
            </div>
          </div>
          <div className="ml-[14px] flex w-[688px] flex-col">
            <div className="flex h-[23px] shrink-0 items-end">
              <div className="h-[24px] w-[63px] border border-b-0 border-[#dcdcdc] bg-white pt-[3px] pl-[7px]">组</div>
              {CELL_TABS.map((t, i) => (
                <div key={t} className={`h-[21px] border border-b-0 border-l-0 border-[#d9d9d9] pt-[3px] pl-[5px] ${i === 0 ? "w-[59px]" : "w-[60px]"}`}>{t}</div>
              ))}
              <div className="h-[21px] w-[81px] border border-b-0 border-l-0 border-[#d9d9d9] pt-[3px] pl-[6px] whitespace-nowrap">质心(Pro)</div>
            </div>
            <div className="flex flex-1 flex-col border border-[#dcdcdc] bg-white">
              <div className="flex h-[331px]">
                <div className="w-[481px] shrink-0 pt-[6px] pl-[12px]">
                  <div className="relative mt-[8px] ml-[2px] flex h-[33px] w-[225px] items-center gap-[52px] border border-[#dcdcdc] pt-1 pl-[6px]">
                    <span className="absolute -top-[8px] left-[6px] bg-white px-0.5">编辑模式</span>
                    <Radio on label="独立(I)" />
                    <Radio label="从属(D)" />
                  </div>
                  <div className="mt-[8px] ml-[3px] text-[15px] leading-[15px]">右击以获取更多选项，如果嵌套可以拖动<br />并移动行以重新排列</div>
                  <div className="mt-[9px] ml-[5px] flex h-[230px] w-[439px] flex-col border-2 border-[#696969] bg-[#808080] outline outline-[#b0b0b0]">
                    <div className="flex h-[28px] border-b-2 border-[#a0a0a0] bg-[#f0f0f0] pt-1">
                      <div className="w-[70px] border-r border-[#a0a0a0]" />
                      <div className="w-[60px] border-r border-[#a0a0a0] pt-[3px] pl-1">增量</div>
                      <div className="w-[60px] border-r border-[#a0a0a0] pt-[3px] pl-1">子组</div>
                      <div className="pt-[3px] pl-1">细节</div>
                    </div>
                  </div>
                </div>
                <div className="pt-[9px]">
                  <div>组成员</div>
                  <div className="mt-[9px] flex h-[287px] w-[194px] flex-col border border-[#828790] pt-[2px] font-['Liberation_Mono',monospace] text-[13.333px]">
                    {members.map(([m, c]) => (
                      <div key={m} className="flex h-8 items-center pl-px"><div className={`mr-[18px] h-[2px] w-[66px] ${c}`} />{m}</div>
                    ))}
                  </div>
                </div>
              </div>
              <div className="relative mt-[25px] ml-[17px] h-[107px] w-[659px] border border-[#dcdcdc] pt-[14px] pl-[19px]">
                <span className="absolute -top-[8px] left-[7px] bg-white px-0.5">分组</span>
                <div>启用子组</div>
                <div className="mt-[8px] flex">
                  <div className="w-[108px]"><Radio on label="无" /></div>
                  <div className="w-[120px]"><Radio label="按大小" /></div>
                  <div className="w-[134px]"><Radio label="按列标签" /></div>
                  <div className="-mt-[3px]"><Radio label="按轴" /></div>
                </div>
              </div>
            </div>
          </div>
        </div>
        <div className="mt-[12px] flex items-center">
          <span className="ml-[48px] w-[110px]">绘图类型(T)</span>
          <div className="flex h-[24px] w-[269px] items-center justify-between border border-[#bfbfbf] bg-[#cccccc] px-1 text-[#7a7a7a]">折线图<svg width="11" height="7"><path d="M1 1l4 4 4-4" fill="none" stroke="#999" /></svg></div>
          <div className={`${btn} ml-[16px] w-[37px] border-[#adadad]`}>&gt;&gt;</div>
          <div className={`${btn} ml-[17px] w-[97px] border-[#adadad]`}>工作簿</div>
          <div className={`${btn} ml-[17px] w-[73px] border-2 border-[#0078d7]`}>确定</div>
          <div className={`${btn} ml-[13px] w-[73px] border-[#adadad]`}>取消</div>
          <div className={`${btn} ml-[19px] w-[73px] border-[#adadad]`}>应用(A)</div>
        </div>
      </div>
    </div>
  );
}

function ObjectManager() {
  const box = "flex size-[11px] shrink-0 items-center justify-center border border-[#8a9ab0] bg-white";
  const dash = <div className="h-[2px] w-[7px] bg-[#2f5fa8]" />;
  const leaves: [string, string, string][] = [["B", "bg-[#515151]", "font-bold"], ["C", "bg-[#f14040]", ""], ["E", "bg-[#1a6fdf]", ""]];
  return (
    <div className="flex h-[860px] w-[190px] shrink-0 flex-col font-['Roboto','Noto_Sans_CJK_SC',sans-serif] text-[13.500px]">
      <div className="flex h-[28px] items-center bg-linear-to-b from-[#98b2cf] to-[#b9d0e9] pr-[5px] pb-px pl-[4px]">
        <span className="font-['Noto_Sans_CJK_SC',sans-serif] text-[14px]">对象管理器</span>
        <svg width="44" height="10" className="ml-auto"><path d="M1 3h9L5.500 8z" /><path d="M21 1v5M25 1v5M19 6.500h8M23 7v3M21 1h4" stroke="#000" fill="none" /><path d="M35 1l8 8M43 1l-8 8" stroke="#000" strokeWidth="1.600" /></svg>
      </div>
      <div className="flex flex-1 flex-col border-2 border-[#636366] bg-white">
        <div className="flex h-[21px] shrink-0 items-center justify-end gap-[5px] bg-linear-to-b from-white to-[#b4b5cc] pr-[3px]">
          <svg width="16" height="16" shapeRendering="crispEdges"><path d="M.5 0v15.500H16M2 9l4-5 4 6 4-5" fill="none" stroke="#000" /><path d="M2 2l5 6 3-4 5 6M2 6l6 4" fill="none" stroke="red" strokeWidth="1.200" /></svg>
          <svg width="16" height="16"><path d="M.7.7h14.600v10H9L7.500 15 6 10.700H.7z" fill="#fff" stroke="#1a6fdf" strokeWidth="1.400" /><path d="M8 2v8M4 6h8" stroke="red" strokeWidth="1.500" /></svg>
        </div>
        <div className="flex h-[22px] shrink-0 items-center border border-dotted border-[#e8a050] bg-[#0078d7] pl-[2px] text-white"><div className={box}>{dash}</div><div className="mr-[3px] ml-1"><Folder /></div>Graph3</div>
        <div className="flex h-[22px] items-center pl-[18px]"><div className={box}>{dash}</div><div className="mr-[3px] ml-1"><Check small /></div>Layer1</div>
        <div className="flex h-[22px] items-center pl-[34px]"><div className={box}>{dash}</div><div className="mr-[3px] ml-1"><Check small /></div>g1</div>
        {leaves.map(([t, c, f], i) => (
          <div key={t} className="flex h-[22px] items-center pl-[40px]">
            <div className={`w-[10px] border-l border-dotted border-[#999] ${i === 2 ? "h-[11px] self-start" : "h-full"}`}><div className="mt-[11px] border-t border-dotted border-[#999]" /></div>
            <div className="ml-[15px]"><Check small /></div>
            <div className={`mr-[3px] ml-px h-[2px] w-[47px] ${c}`} /><span className={f}>{t}</span>
          </div>
        ))}
      </div>
    </div>
  );
}

const MENUS: [string, string, string][] = [
  ["文件", "F", "w-[58px]"], ["编辑", "E", "w-[58px]"], ["查看", "V", "w-[60px]"], ["图", "G", "w-[47px]"], ["格式", "O", "w-[62px]"],
  ["插入", "I", "w-[54px]"], ["数据", "D", "w-[62px]"], ["分析", "A", "w-[60px]"], ["快捷分析", "S", "w-[86px]"], ["工具", "T", "w-[58px]"],
  ["设置", "R", "w-[59px]"], ["连接", "N", "w-[61px]"], ["窗口", "W", "w-[64px]"], ["帮助", "H", "w-[50px]"],
];

export default function App() {
  return (
    <div className="relative h-[1030px] w-[1920px] overflow-hidden bg-linear-to-r from-[#ebecfb] via-[#eef0fb] to-[#f2f5fd] font-['Open_Sans','Noto_Sans_CJK_SC',sans-serif] text-black">
      <div className="flex h-[29px] items-center bg-white pl-[2px]">
        <svg width="21" height="22" viewBox="0 0 21 22"><path d="M9 1h11v15H9z" fill="#e8eef8" stroke="#2848b0" strokeWidth="1.500" /><ellipse cx="9" cy="12" rx="8.500" ry="9.500" fill="#d0503c" /><ellipse cx="8" cy="10" rx="6" ry="7" fill="#e08a78" /><path d="M5 17l2-7 3 3 4-8" fill="none" stroke="#8a1c10" strokeWidth="1.500" /></svg>
        <span className="ml-1 text-[15.500px] tracking-[-0.050px] text-[#8f8f8f]">OriginPro 2025 (学习版) - UNTITLED * - [Graph3 *]</span>
        <svg width="130" height="16" className="mr-[26px] ml-auto" fill="none" stroke="#8c8c8c"><path d="M1 7.500h12M59.500 4.500h8v11h-8zM61.500 4.500v-3h9v11h-3M118 1l12 14M130 1l-12 14" /></svg>
      </div>

      <div className="flex h-[28px]">
        <Bar className="w-[826px]">
          <Tools s="new open sheet gpage matrix func v layout notes axis flower | folder cloud save savep | run stop |" />
          <Combo text="100%" className="mr-1 ml-[2px] w-[74px]" />
          <div className="w-[5px] shrink-0" />
          <Tools s="print slide mag edit tile waves | tree | find !gfind table tedit gear | addcol cmd" />
        </Bar>
        <Bar className="w-[268px]"><Tools s="sigcol sigrow sort | num | bars1 bars2 bars3 | filter filterx filterr" /></Bar>
        <Bar className="w-[259px]"><Tools s="addw | xx yy zz err home | first prev next last" /></Bar>
        <Bar className="w-[171px]"><Tools s="arr2 arr2d | arrR arrS | arrT arrL" /></Bar>
      </div>

      <div className="flex h-[29px] items-center font-['Noto_Sans_CJK_SC',sans-serif] text-[13.500px] tracking-[-0.100px]">
        <div className="ml-[3px] h-4 border-l-[3px] border-dotted border-[#a5a5ad]" />
        <svg width="18" height="19" className="mr-[13px] ml-[4px]"><rect x="1" y="1" width="16" height="16" fill="#00b8b8" stroke="#533" strokeWidth="2" /><path d="M4 6h6M8 11h6M4 13h4" stroke="#063a70" strokeWidth="1.500" /><path d="M1 18h16" stroke="#555" strokeDasharray="2 1" strokeWidth="2" /></svg>
        {MENUS.map(([t, k, w]) => (
          <div key={t} className={`${w} shrink-0 whitespace-nowrap`}>{t}(<u>{k}</u>)</div>
        ))}
        <svg width="52" height="12" className="mt-1 mr-[6px] ml-auto" fill="none" stroke="#000"><path d="M1 9.500h6" strokeWidth="2" /><path d="M22.500 5.500h5v5h-5zM24.500 5V1.500h5v5h-2" strokeWidth="1.400" /><path d="M42 2l7 8M49 2l-7 8" strokeWidth="1.600" /></svg>
      </div>

      <div className="flex h-[28px] pl-[580px]">
        <Bar className="w-[222px]"><Tools s="back fwd upf | upadd dnadd | cycle pin | undo" /></Bar>
      </div>

      <div className="flex h-[29px]">
        <Bar className="w-[246px]"><Tools s="wand n123 | excel gsheet gsheet2 | batch | plug globe copyg" /></Bar>
        <Bar className="w-[90px]"><Tools s="cut copy paste" /></Bar>
        <Bar className="w-[559px]">
          <div className="flex h-[23px] w-[159px] shrink-0 items-center gap-[7px] border-2 border-[#ababaf] bg-[#f4f6fa] px-1 text-[14px]"><Icon name="fontTT" /><span className="flex-1 text-[#8b8b8b]">默认: 宋体</span><Tri gray /></div>
          <Combo text="0" className="mr-1 ml-1 w-[73px]" />
          <Tools s="gB gI gU gsup gsub gss gab gAu gAd align v vlines w gA v" />
        </Bar>
        <Bar className="w-[524px]">
          <Tools s="bucket w palette w pen v bulb" />
          <div className="ml-[5px] flex h-[23px] w-[60px] shrink-0 items-center gap-1 bg-white"><div className="ml-1 h-px w-[36px] bg-black" /><span className="text-[12px]">实</span></div>
          <div className="h-[23px] w-[12px] shrink-0 bg-[#d5d6e4]" />
          <div className="ml-[6px] flex h-[24px] w-[72px] shrink-0 items-center bg-white pl-[3px] text-[13.500px]"><span className="flex-1">1.5</span><div className="flex h-[22px] w-[13px] items-center justify-center bg-[#c5c6da]"><Tri /></div></div>
          <div className="mr-[4px] ml-[2px] h-[16px] w-[40px] shrink-0 border-2 border-l-0 border-[#c0c1cc] bg-[#f1f3f9]" />
          <Tri gray />
          <Combo text="0" className="ml-[4px] w-[74px]" />
          <div className="w-[4px] shrink-0" />
          <Tools s="hatch v dotg v tblA" />
        </Bar>
        <Bar className="w-[149px]"><Tools s="mred mx | mv mv2 | lock" /></Bar>
        <Bar className="w-[68px]"><Tools s="addl addt" /></Bar>
      </div>

      <div className="flex h-[861px]">
        <div className="flex w-[25px] shrink-0 flex-col gap-[14px] pt-[4px] font-['Noto_Sans_CJK_SC',sans-serif] text-[14.500px] leading-none text-[#6d6d6d]">
          {[["项目管理器  (1)", "h-[134px]"], ["消息日志", "h-[88px]"], ["提示日志", "h-[88px]"]].map(([t, h]) => (
            <div key={t} className={`${h} flex w-[23px] items-center border-r-2 border-b-2 border-[#d9d9dc] bg-[#f0f0f0] pt-1 pl-[3px] whitespace-pre [text-orientation:sideways] [writing-mode:vertical-rl]`}><span className="self-center">{t}</span></div>
          ))}
        </div>
        <div className="flex w-[36px] shrink-0 flex-col pt-[1px]">
          <VBar className="h-[440px] w-[35px]" s="!cursor zin zout cross target+ range ellip+ mask+ dots tt addx+ curve+ line+ rect+ hand sqrt+ gpage+ handa box3" />
          <VBar className="h-[242px] w-[35px]" s="colors bub box leg star+ scale clock fstamp grid sqrt" />
        </div>
        <div className="flex w-[1629px] shrink-0 flex-col">
          <div className="relative h-[831px] border-t-2 border-r-2 border-b border-l-2 border-t-[#6f6f72] border-r-[#e4e5ee] border-b-[#d5d5d5] border-l-[#77777a] bg-[#c0c0c0]">
            <Chart />
          </div>
          <div className="flex h-[30px] pt-px">
            <Bar className="w-[323px]"><Tools s="bline v bdots v bld v bbar v bwave v bbox v barea v bpolar v bstock v bgray" /></Bar>
            <Bar className="w-[209px]"><Tools s="cube1 v | cube2 v cube3 v ggrid v gwave v gpat" /></Bar>
            <Bar className="w-[171px]"><Tools s="face facex | mask2 ar1 ar2 | ar3" /></Bar>
            <Bar className="w-[346px]"><Tools s="rot1 rot2 til1 til2 trap1 trap2 trap3 sq2 expand cubes cubeb" /><Combo text="10" className="w-[75px]" /></Bar>
          </div>
        </div>
        <div className="flex w-[40px] shrink-0 flex-col pl-[1px]">
          <VBar className="h-[391px] w-[26px]" s="black ax1 ax2 ax3 xy !runner | mg1 mg2 mg3 waves | fr1 fr2 fr3 fr4 fr5 fr6" />
          <VBar className="h-[453px] w-[35px]" s="al1 al2 | al3 al4 | al5 al6 | al7 al8 | ds1 ds2 swap+ | front backw | gl1 gl2 | grp ungrp" />
        </div>
        <ObjectManager />
      </div>

      <div className="flex h-[26px] items-center border-t-2 border-[#d4d4d8] bg-[#f0f0f0] pt-px text-[13px]">
        <span className="ml-[43px] w-[22px] tracking-[1px]">&lt;&lt;</span>
        <span className="text-[13.700px]">【开始】菜单 (F1)</span>
        <div className="ml-auto flex h-full items-center">
          <span className="border-l border-[#d0d0d0] px-[9px]">--</span>
          <span className="mx-2 border-l border-[#d0d0d0] pl-[4px] whitespace-nowrap">AU : 开</span>
          <span className="w-[191px] overflow-hidden border-l border-[#d0d0d0] pl-[8px] whitespace-nowrap tracking-[0.150px]">1:[Book1]BAND11!Col(B)[1:78</span>
        </div>
        <div className="flex h-[27px] w-[190px] items-center bg-white pl-[4px] font-['Noto_Sans_CJK_SC',sans-serif] text-[18px] leading-none font-bold">
          <div className="h-4 border-l-[3px] border-dotted border-[#c5c5c5]" />
          <span className="ml-[8px] flex size-[20px] items-center justify-center border border-[#666] text-[16px] font-medium">拼</span>
          <span className="ml-[8px]">中</span>
          <svg width="20" height="20" className="ml-[8px]"><path d="M8 2q8 3 8 9t-7 7q-6 0-8-5 6 1 8-2t-1-9z" fill="none" stroke="#000" strokeWidth="2.200" /></svg>
          <svg width="18" height="20" className="ml-[4px]"><rect x="1" y="3" width="4" height="4" fill="none" stroke="#000" strokeWidth="1.500" /><path d="M9 8a3 3 0 116 1q0 6-5 8l-1-2q3-1 3-4-3 0-3-3z" /></svg>
          <span className="ml-[7px]">简</span>
          <svg width="20" height="20" className="ml-[6px]" fill="none" stroke="#000"><circle cx="10" cy="10" r="6.500" strokeWidth="2.500" /><circle cx="10" cy="10" r="8.500" strokeWidth="2" strokeDasharray="3 3.600" /><circle cx="10" cy="10" r="2.500" strokeWidth="1.800" /></svg>
          <svg width="8" height="16" className="ml-[14px]"><path d="M1 2h6v2H1zM0 9h8l-4 4z" /></svg>
        </div>
      </div>

      <svg width="42" height="40" viewBox="0 0 42 40" className="absolute top-[991px] left-0">
        <ellipse cx="17" cy="26" rx="15" ry="13" fill="#d08878" /><circle cx="19" cy="15" r="12.500" fill="#d4d4ee" fillOpacity=".8" stroke="#2a62e8" strokeWidth="3.500" />
        <path d="M8 13q11-7 22 0" fill="none" stroke="#c88" strokeWidth="2" /><path d="M12 20l5-4 4 3 5-6" fill="none" stroke="#5878c8" strokeWidth="1.500" /><path d="M28 24l8 9" stroke="#2a62e8" strokeWidth="5" strokeLinecap="round" />
      </svg>

      <Dialog />

      <div className="absolute top-[154px] left-[1012px] font-['Open_Sans','Noto_Sans_CJK_SC',sans-serif] text-[50px] leading-[66px] whitespace-nowrap text-black">
        <div className="flex"><span className="w-[42px]">1.</span><span className="w-[200px]">单击右栏</span><span className="w-[144px] tracking-[-1px]">“g1”，</span><span className="w-[252px]">将线宽变为</span><span className="tracking-[-1px]">1.5</span></div>
        <div className="flex"><span className="w-[42px]">2.</span><span className="w-[100px]">双击</span><span className="w-[144px] tracking-[-1px]">“g1”，</span><span className="w-[100px]">弹出</span><span className="w-[18px]">“</span><span className="w-[200px]">绘图细节</span><span>”，</span></div>
        <div className="flex"><span className="w-[300px]">将编辑模式从</span><span className="w-[18px]">“</span><span className="w-[100px]">从属</span><span className="w-[20px]">”</span><span className="w-[100px]">变为</span><span className="w-[20px]">“</span><span className="w-[100px]">独立</span><span>”。</span></div>
      </div>

      <div className="absolute top-[105px] left-[1095px] h-[45px] w-[97px] rounded-[5px] border-[5px] border-[#fa5262]" />
      <div className="absolute top-[237px] left-[1751px] h-[28px] w-[143px] rounded-[4px] border-[5px] border-[#fa5262]" />

      <div className="absolute top-[20px] left-[1752px] flex h-[46px] w-[162px] items-center overflow-hidden rounded-[8px] border border-[#1296fa] bg-[#f2f8ff]">
        <div className="flex h-full w-[46px] items-center justify-center rounded-[7px] bg-linear-to-tr from-[#2aa8ff] to-[#0a84ff]">
          <svg width="28" height="24" fill="none" stroke="#fff" strokeWidth="3.500"><circle cx="14" cy="7" r="5" /><circle cx="7" cy="16" r="5" /><circle cx="21" cy="16" r="5" /></svg>
        </div>
        <span className="ml-[7px] font-['Noto_Sans_CJK_SC',sans-serif] text-[16.200px] font-medium text-[#1296fa]">拖拽至此上传</span>
      </div>
    </div>
  );
}
